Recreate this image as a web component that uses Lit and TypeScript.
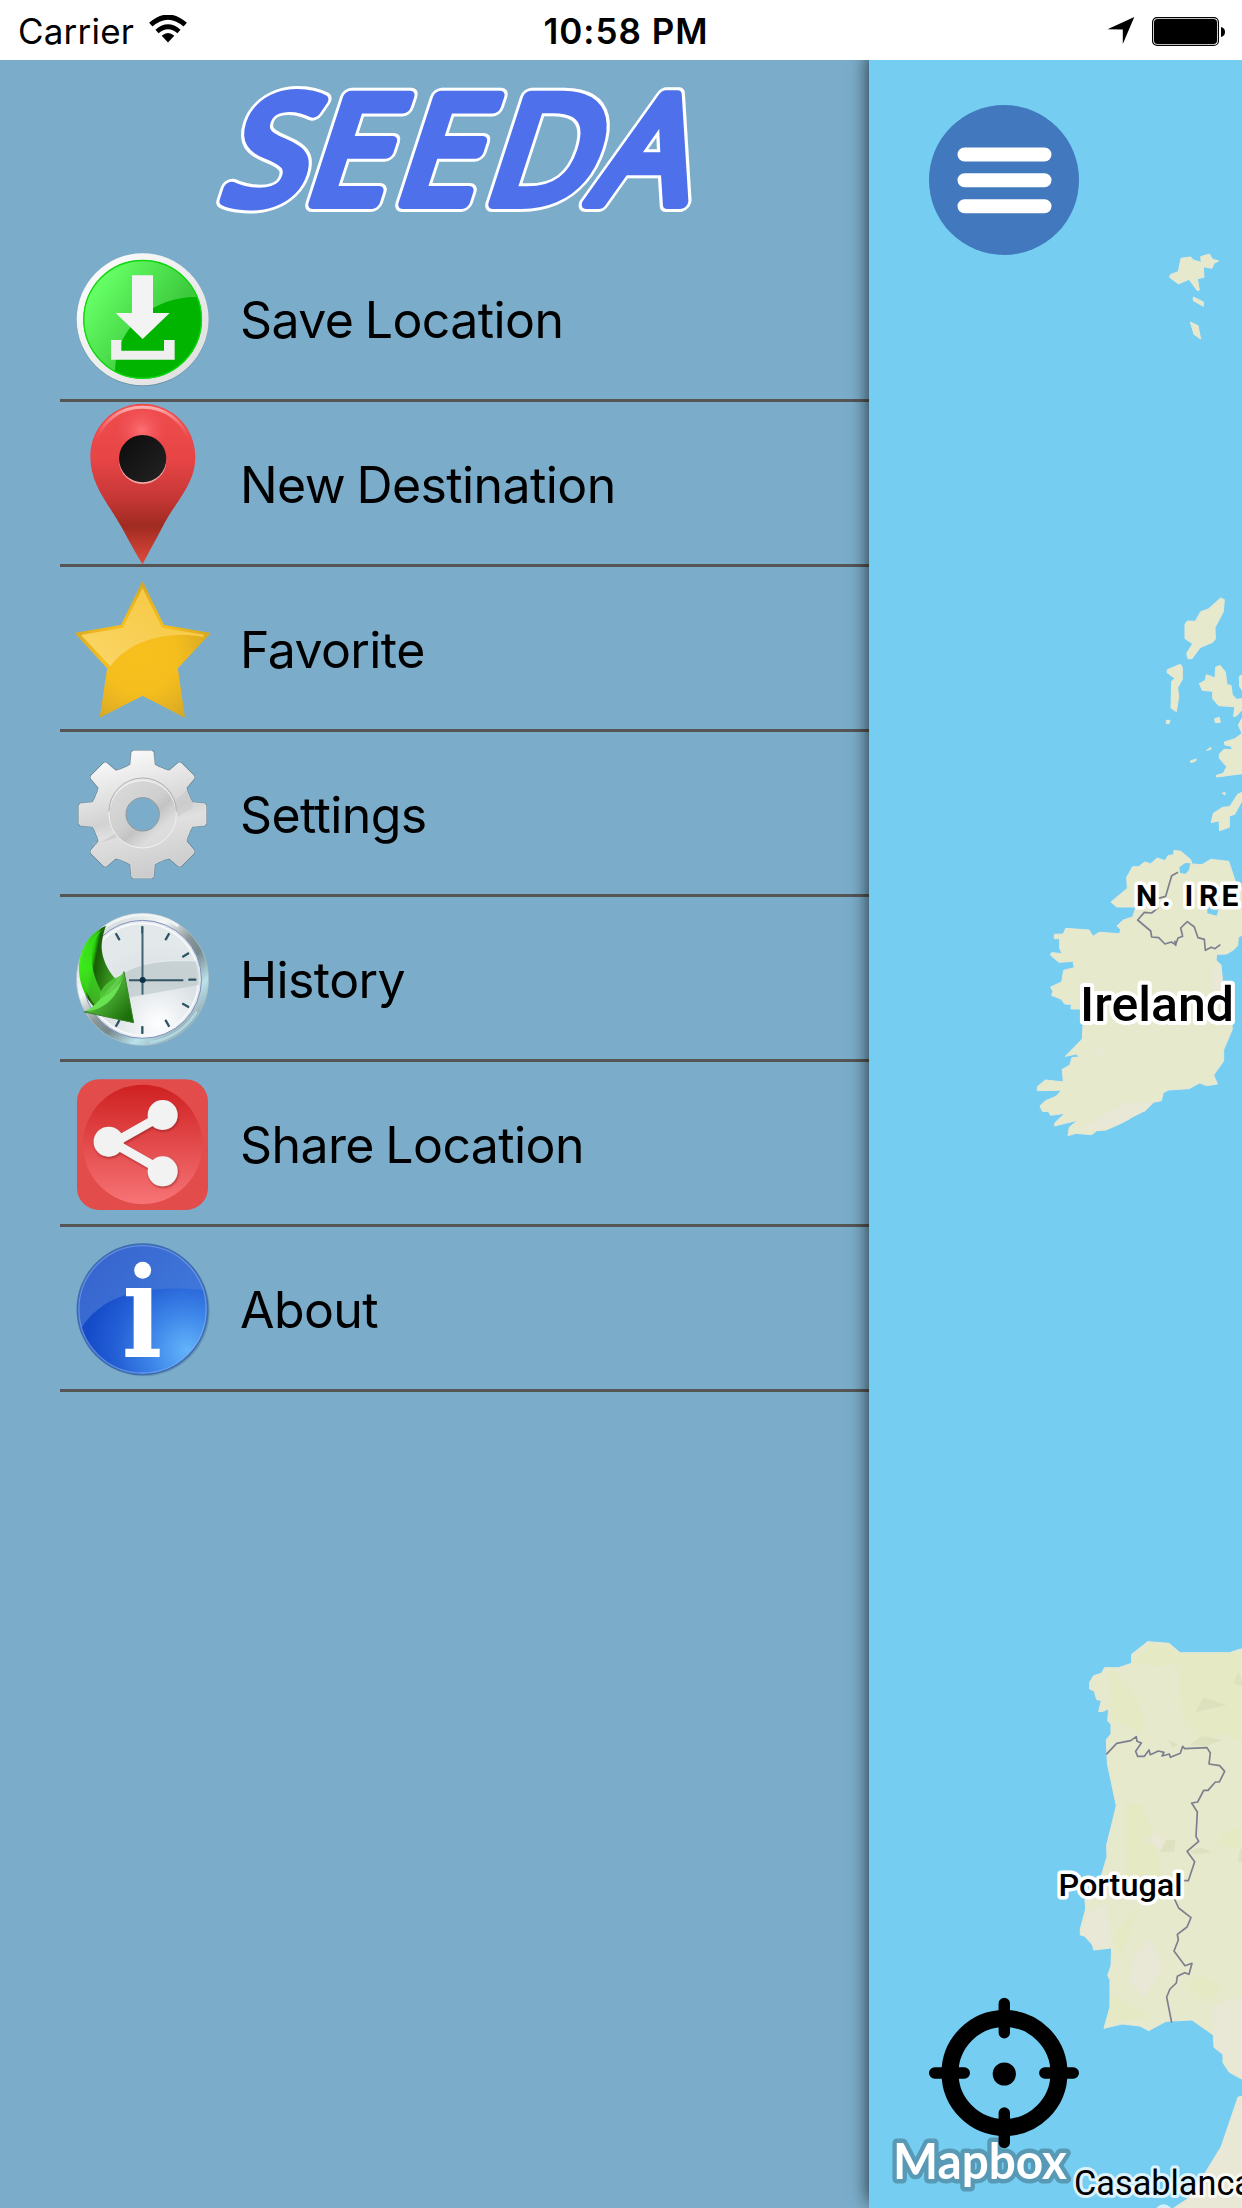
import { LitElement, html, svg, css, type SVGTemplateResult } from "lit";
import { customElement, property } from "lit/decorators.js";

/** Outline of an eight-toothed wheel centred on (cx, cy). */
function gearPath(cx: number, cy: number): string {
  const tooth: [number, number][] = [
    [-47, -143], [-36, -150], [-33, -186], [-28, -191],
    [28, -191], [33, -186], [36, -150], [47, -143],
  ];
  let d = "";
  for (let k = 0; k < 8; k++) {
    const a = (k * Math.PI) / 4;
    tooth.forEach(([x, y], i) => {
      const px = (cx + x * Math.cos(a) - y * Math.sin(a)).toFixed(1);
      const py = (cy + x * Math.sin(a) + y * Math.cos(a)).toFixed(1);
      if (k === 0 && i === 0) d += `M${px} ${py}`;
      else if (i === 0) d += `A150 150 0 0 1 ${px} ${py}`;
      else d += `L${px} ${py}`;
    });
  }
  return d + "Z";
}

const GEAR = gearPath(277.5, 763.5);

/** Clock marks: centre x, centre y, rotation in degrees. */
const ticks = [
  [277, 120, 0], [352, 140, 30], [407, 195, 60], [427, 269, 90],
  [407, 346, -60], [352, 400, -30], [277, 420, 0], [203, 400, 30], [203, 140, -30],
];

interface Glyph { box: string; art: SVGTemplateResult; }

const ICONS: Record<string, Glyph> = {
  save: {
    box: "72 -9 408 486",
    art: svg`
      <defs>
        <linearGradient id="ring" x1="0" y1="0" x2="1" y2="1"><stop offset="0" stop-color="#fff"/><stop offset="1" stop-color="#dcdcdc"/></linearGradient>
        <linearGradient id="gloss" gradientUnits="userSpaceOnUse" x1="130" y1="150" x2="330" y2="290"><stop offset="0" stop-color="#66ff66"/><stop offset="1" stop-color="#3cc93c"/></linearGradient>
        <clipPath id="disc"><circle cx="278" cy="238" r="177"/></clipPath>
      </defs>
      <circle cx="278" cy="240" r="198.5" fill="#5f7f90" opacity=".55"/>
      <circle cx="278" cy="238" r="198" fill="url(#ring)"/>
      <circle cx="278" cy="238" r="178" fill="#00b400"/>
      <path d="M90 50H460V172C340 160 200 240 195 392L90 420Z" fill="url(#gloss)" clip-path="url(#disc)"/>
      <circle cx="278" cy="238" r="176.500" fill="none" stroke="#11d811" stroke-width="4"/>
      <path d="M246 106H309V219H359L278 297L197 219H246Z" fill="#f3f3f3"/>
      <path d="M183 300H214V332H342V300H374V359H183Z" fill="#efefef"/>`,
  },
  pin: {
    box: "72 486 408 486",
    art: svg`
      <defs>
        <linearGradient id="pin" x1="0" y1="0" x2="0" y2="1"><stop offset="0" stop-color="#f04d4f"/><stop offset=".35" stop-color="#e74446"/><stop offset=".6" stop-color="#c43634"/><stop offset=".76" stop-color="#a02b21"/><stop offset="1" stop-color="#e04a3c"/></linearGradient>
        <radialGradient id="glow" gradientUnits="userSpaceOnUse" cx="275" cy="572" r="75"><stop offset="0" stop-color="#ff7074"/><stop offset="1" stop-color="#f05558" stop-opacity="0"/></radialGradient>
        <linearGradient id="rim" gradientUnits="userSpaceOnUse" x1="0" y1="495" x2="0" y2="600"><stop offset="0" stop-color="#ffb9ba"/><stop offset="1" stop-color="#f57072" stop-opacity="0"/></linearGradient>
        <linearGradient id="hole" x1="0" y1="0" x2="1" y2="1"><stop offset="0" stop-color="#0b0b0b"/><stop offset="1" stop-color="#242424"/></linearGradient>
      </defs>
      <path d="M278 491C190 491 121 562 121 650C121 735 175 790 214 860C240 908 262 948 278 973C292 944 315 905 337 862C375 785 436 735 436 650C436 562 366 491 278 491Z" fill="url(#pin)"/>
      <circle cx="275" cy="572" r="75" fill="url(#glow)"/>
      <path d="M137 606C158 540 212 502 278 502S398 540 420 606" fill="none" stroke="url(#rim)" stroke-width="9"/>
      <circle cx="278" cy="661" r="71" fill="#f2a8a6"/>
      <circle cx="278" cy="656" r="71" fill="url(#hole)"/>`,
  },
  star: {
    box: "72 21 408 486",
    art: svg`
      <defs>
        <radialGradient id="gold" gradientUnits="userSpaceOnUse" cx="270" cy="290" r="220"><stop offset="0" stop-color="#f7c01c"/><stop offset=".5" stop-color="#f5be1e"/><stop offset="1" stop-color="#d8a824"/></radialGradient>
        <linearGradient id="sheen" gradientUnits="userSpaceOnUse" x1="120" y1="300" x2="300" y2="80"><stop offset="0" stop-color="#fad565"/><stop offset="1" stop-color="#f7ca45"/></linearGradient>
      </defs>
      <path d="M277.500 66L341 196L480 220L382 325L403 471L277.500 406L151 471L173 325L76 220L214 196Z" fill="url(#gold)" stroke="url(#gold)" stroke-width="3"/>
      <path d="M277.500 84L336 203L462 224L459 231C350 212 240 240 181 319L93 225L219 203Z" fill="url(#sheen)"/>`,
  },
  gear: {
    box: "72 516 408 486",
    art: svg`
      <defs>
        <linearGradient id="steel" gradientUnits="userSpaceOnUse" x1="220" y1="570" x2="320" y2="960"><stop offset="0" stop-color="#fbfbfb"/><stop offset=".35" stop-color="#dfdfe0"/><stop offset=".5" stop-color="#d2d2d3"/><stop offset=".6" stop-color="#e0e0e0"/><stop offset="1" stop-color="#c9c9ca"/></linearGradient>
        <linearGradient id="steel2" gradientUnits="userSpaceOnUse" x1="200" y1="680" x2="350" y2="850"><stop offset="0" stop-color="#d9d9da"/><stop offset=".45" stop-color="#cfcfd0"/><stop offset=".6" stop-color="#c3c3c4"/><stop offset=".8" stop-color="#dcdcdd"/></linearGradient>
        <mask id="bore" maskUnits="userSpaceOnUse" x="72" y="516" width="408" height="486"><rect x="72" y="516" width="408" height="486" fill="#fff"/><circle cx="278" cy="763" r="49" fill="#000"/></mask>
      </defs>
      <g mask="url(#bore)">
        <path d=${GEAR} fill="none" stroke="#596a74" stroke-width="5" stroke-linejoin="round" opacity=".8"/>
        <path d=${GEAR} fill="url(#steel)" stroke="#f2f2f2" stroke-width="1.500"/>
        <path d="M330 763L410 690Q428 720 428 745L345 790Z" fill="#c4c4c5" opacity=".4"/>
        <path d="M255 815L130 855Q125 835 140 855L260 780Z" fill="#b9b9ba" opacity=".4"/>
        <circle cx="278" cy="763" r="101" fill="url(#steel2)" stroke="#f1f1f1" stroke-width="3"/>
        <path d="M177 755A101 101 0 0 1 379 755" fill="none" stroke="#a3a3a4" stroke-width="2.500"/>
      </g>
      <circle cx="278" cy="763" r="50" fill="none" stroke="#84939b" stroke-width="3"/>`,
  },
  history: {
    box: "72 21 408 486",
    art: svg`
      <defs>
        <linearGradient id="bezel" x1=".15" y1=".1" x2=".85" y2=".9"><stop offset="0" stop-color="#d0d8d9"/><stop offset=".3" stop-color="#f4f7f7"/><stop offset=".5" stop-color="#8a9697"/><stop offset=".62" stop-color="#76898d"/><stop offset=".8" stop-color="#b9e3ea"/><stop offset="1" stop-color="#8fa1ab"/></linearGradient>
        <radialGradient id="dial" gradientUnits="userSpaceOnUse" cx="325" cy="400" r="240"><stop offset="0" stop-color="#fff"/><stop offset=".25" stop-color="#eff2f4"/><stop offset=".6" stop-color="#dbe1e4"/><stop offset="1" stop-color="#e3e8eb"/></radialGradient>
        <linearGradient id="leaf" gradientUnits="userSpaceOnUse" x1="90" y1="200" x2="195" y2="220"><stop offset="0" stop-color="#49ee22"/><stop offset=".35" stop-color="#28c808"/><stop offset=".45" stop-color="#175d05"/><stop offset="1" stop-color="#3b9a20"/></linearGradient>
        <linearGradient id="lit" gradientUnits="userSpaceOnUse" x1="120" y1="120" x2="140" y2="345"><stop offset="0" stop-color="#35d817"/><stop offset=".5" stop-color="#3aea1a"/><stop offset="1" stop-color="#45b52c"/></linearGradient>
        <linearGradient id="tip" gradientUnits="userSpaceOnUse" x1="160" y1="300" x2="240" y2="370"><stop offset="0" stop-color="#54bb3c"/><stop offset="1" stop-color="#1c6f0a"/></linearGradient>
      </defs>
      <circle cx="277.500" cy="268" r="198" fill="url(#bezel)" stroke="#b4c2c9" stroke-width="2"/>
      <path d="M96 205A192 192 0 0 1 385 108" fill="none" stroke="#eef3f4" stroke-width="9"/>
      <path d="M300 457A190 190 0 0 0 440 365" fill="none" stroke="#b4e0e9" stroke-width="8" opacity=".8"/>
      <circle cx="277.500" cy="268" r="177" fill="url(#dial)" stroke="#8392c0" stroke-width="3"/>
      <circle cx="277.500" cy="268" r="168" fill="none" stroke="#f7f9fa" stroke-width="5"/>
      <path d="M195 268C245 220 330 208 438 213Q450 245 447 285L195 330Z" fill="#b4c3c5" opacity=".55"/>
      <path d="M195 268C245 220 330 208 438 213" fill="none" stroke="#edf1f2" stroke-width="2"/>
      ${ticks.map(([x, y, r]) => svg`<rect x=${x - 3.5} y=${y - 12} width="7" height="24" rx="2" fill="#2d5566" transform="rotate(${r} ${x} ${y})"/>`)}
      <path d="M277.500 132V314" stroke="#416271" stroke-width="6"/>
      <path d="M237 270.500H400" stroke="#325463" stroke-width="6"/>
      <circle cx="278" cy="270" r="9" fill="#0a3246"/>
      <path d="M168 107C108 135 84 190 87 245C90 290 110 325 131 350L200 270C170 240 148 190 157 150C158 135 164 118 168 107Z" fill="url(#leaf)"/>
      <path d="M160 118C115 155 112 235 160 315L137 347C85 290 72 170 160 118Z" fill="url(#lit)" opacity=".85"/>
      <path d="M222 245L251 398L103 366C160 352 195 320 222 245Z" fill="url(#tip)" stroke="#3a8229" stroke-width="3"/>
      <path d="M222 248C212 288 190 300 160 315C145 335 125 355 107 364C160 360 205 325 222 248Z" fill="#68e252"/>
      <path d="M192 265Q208 262 222 247C212 288 190 305 150 327C145 300 170 280 192 265Z" fill="#51c937" opacity=".85"/>`,
  },
  share: {
    box: "72 516 408 486",
    art: svg`
      <defs>
        <linearGradient id="red" x1="0" y1="0" x2="0" y2="1"><stop offset="0" stop-color="#cf2021"/><stop offset="1" stop-color="#f77476"/></linearGradient>
        <filter id="drop" x="-20%" y="-20%" width="140%" height="140%"><feDropShadow dx="2" dy="4" stdDeviation="3" flood-color="#7a1010" flood-opacity=".6"/></filter>
      </defs>
      <rect x="81" y="568" width="393" height="392" rx="66" fill="#e24c4a"/>
      <circle cx="278" cy="763" r="179" fill="url(#red)"/>
      <g filter="url(#drop)" fill="#f2f2f2">
        <path d="M338 675L190 759L338 843" fill="none" stroke="#f2f2f2" stroke-width="27"/>
        <circle cx="338" cy="675" r="45"/><circle cx="176" cy="755" r="45"/><circle cx="338" cy="844" r="45"/>
      </g>`,
  },
  info: {
    box: "72 21 408 486",
    art: svg`
      <defs>
        <radialGradient id="blue" gradientUnits="userSpaceOnUse" cx="410" cy="390" r="300"><stop offset="0" stop-color="#62b4fb"/><stop offset=".35" stop-color="#3f88ea"/><stop offset=".7" stop-color="#2460d6"/><stop offset="1" stop-color="#154bc9"/></radialGradient>
        <linearGradient id="cap" x1="0" y1="0" x2="1" y2=".5"><stop offset="0" stop-color="#3560cb"/><stop offset="1" stop-color="#3f78da"/></linearGradient>
        <clipPath id="ball"><circle cx="277.500" cy="268" r="192"/></clipPath>
      </defs>
      <circle cx="282" cy="272" r="197" fill="#4e7d9b" opacity=".5"/>
      <circle cx="277.500" cy="268" r="198" fill="#3e6cb0"/>
      <circle cx="277.500" cy="268" r="193" fill="url(#blue)"/>
      <path d="M70 50H490V212C320 195 170 205 94 324H70Z" fill="url(#cap)" clip-path="url(#ball)"/>
      <circle cx="277.500" cy="268" r="191" fill="none" stroke="#7fa9ec" stroke-width="4" opacity=".65"/>
      <circle cx="278" cy="151" r="25.500" fill="#fff"/>
      <path d="M228 204H304V386H329V411H226V386H251V229H228Z" fill="#fff"/>`,
  },
};

@customElement("menu-row")
class MenuRow extends LitElement {
  @property() icon = "";
  @property() label = "";

  static styles = css`
    :host { display: flex; align-items: center; height: 162px; padding-left: 14px; border-bottom: 3px solid #555; }
    .icon { width: 136px; height: 162px; flex: none; overflow: visible; }
    .label { padding: 4px 0 0 30px; font: 400 50px/60px Inter, "Liberation Sans", sans-serif; letter-spacing: -0.6px; word-spacing: -2px; color: #000; white-space: nowrap; }
  `;

  render() {
    const g = ICONS[this.icon];
    return html`<svg class="icon" viewBox=${g.box}>${g.art}</svg><span class="label">${this.label}</span>`;
  }
}

@customElement("status-bar")
class StatusBar extends LitElement {
  static styles = css`
    :host { display: grid; grid-template-columns: 1fr auto 1fr; align-items: center; height: 60px; box-sizing: border-box; padding: 2px 16px 0 18px; background: #fff; color: #000; font: 400 35px/56px Inter, "Liberation Sans", sans-serif; }
    .side { display: flex; align-items: center; gap: 15px; }
    .end { justify-content: flex-end; gap: 17px; }
    .carrier { letter-spacing: 0.2px; }
    .time { font-weight: 600; letter-spacing: 1px; padding-left: 8px; }
    svg { display: block; flex: none; }
    .lift { margin-top: -4px; }
  `;

  render() {
    return html`
      <div class="side">
        <span class="carrier">Carrier</span>
        <svg class="lift" width="38" height="28" viewBox="0 0 38 28">
          <path d="M1.800 9.700Q19-5.500 36.200 9.700" fill="none" stroke="#000" stroke-width="5"/>
          <path d="M8 16.500Q19 7.200 30 16.500" fill="none" stroke="#000" stroke-width="4.800"/>
          <path d="M12.700 20.700Q19 15.500 25.300 20.700L19 27.500Z"/>
        </svg>
      </div>
      <div class="time">10:58 PM</div>
      <div class="side end">
        <svg width="28" height="28" viewBox="0 0 28 28"><path d="M27.300 0L15.800 27V12.500L0.500 12.200Z"/></svg>
        <svg width="74" height="29" viewBox="0 0 74 29">
          <rect x=".6" y=".6" width="65.800" height="27.800" rx="4.500" fill="none" stroke="#000" stroke-width="1.200"/>
          <rect x="2" y="2" width="63" height="25" rx="3.500"/>
          <path d="M69 10Q73 11 73 15T69 20Z"/>
        </svg>
      </div>`;
  }
}

@customElement("map-view")
class MapView extends LitElement {
  static styles = css`
    :host { display: block; background: #75cef1; box-shadow: 0 -6px 18px rgba(0, 0, 0, 0.78); }
    .canvas { display: block; width: 100%; height: 100%; }
    .land { fill: #e6e9cb; stroke: #e8e7d6; stroke-width: 3; stroke-linejoin: round; }
    .sand { fill: #e9e7d5; }
    .green { fill: #e4eabf; }
    .pale { opacity: 0.6; }
    .hill { fill: #dbdebb; opacity: 0.75; }
    .water { fill: #75cef1; }
    .border { fill: none; stroke: #7d7f8f; stroke-width: 5; stroke-linejoin: round; }
    .name { font-family: Roboto, "Liberation Sans", sans-serif; fill: #000; stroke: #fff; stroke-linejoin: round; paint-order: stroke; }
    .nation { font-size: 49px; font-weight: 500; stroke-width: 8px; }
    .region { font-size: 30px; font-weight: 700; stroke-width: 7px; }
    .state { font-size: 32px; font-weight: 500; stroke-width: 7px; }
    .city { font-size: 35px; font-weight: 400; stroke-width: 6px; stroke: rgba(255, 255, 255, 0.75); }
    .brand { font: 700 49px Lato, sans-serif; fill: #fff; stroke: #5899b5; stroke-width: 9px; stroke-linejoin: round; paint-order: stroke; }
    .bars { stroke: #fff; stroke-width: 14; stroke-linecap: round; }
    .aim { fill: none; stroke: #000; stroke-width: 17; }
    .arms { stroke: #000; stroke-width: 11.4; stroke-linecap: round; }
  `;

  render() {
    return html`
      <svg class="canvas" viewBox="869 60 373 2148">
        <g transform="translate(860 0) scale(.333333)">
          <path class="land" d="M963 775L992 771L1000 780L1024 787L1022 770L1048 762L1058 778L1076 783L1062 790L1056 805L1030 800L1032 832L1012 836L1018 870L1012 872L987 838L955 852L929 832L931 824L955 815Z M1000 891L1030 906V919L1000 902Z M991 966L1014 977L1022 1017L1002 1003Z"/>
        </g>
        <g transform="translate(1100 560) scale(.333333)">
          <path class="land" d="M362 114L373 119L370 155L345 203L346 237L338 247L300 263L276 296H264L260 280L278 251L255 236V193L262 183L286 184L302 155L325 147Z M241 313L247 322V358L233 383L236 412L229 455L213 444L215 364L225 355L201 338L202 329Z M360 316L376 336L381 374L393 376L397 404L410 418L426 416V450L410 467L401 470L404 440L356 437L338 416V394L307 391L298 371L316 361L319 344L345 354L347 322Z M426 345L418 349L419 380L426 390Z M199 481H210L207 491H199Z M344 476L358 472L361 487L346 488Z M426 475L415 495L426 520L405 536L373 546L375 555L392 558L398 569L372 568L358 582V595L380 620L370 640L349 646L350 651L426 641Z M271 603L289 597L287 603L273 608Z M320 571L332 562L333 568Z M367 699L376 698L374 705Z M426 697L413 703L389 740L368 742L340 760L334 788L357 782L359 812L388 802V768L404 763L426 722Z"/>
        </g>
        <g transform="translate(1000 820) scale(.333333)">
          <path class="land" d="M522 91L543 94L572 119L576 132L606 134L632 118L686 124L705 181L726 205V345L715 352L713 377L700 390L680 402L650 403L648 421L663 435L668 490L695 600L697 628L671 689V723L641 765L652 792L620 797L599 789L567 806L506 810L490 818L484 842L460 847L435 873L400 880L388 897L357 913L318 930L290 932L275 944L228 940L204 947L208 922L233 901L163 918L166 907L195 880L152 886L145 874L128 875L120 858L137 842L168 829L185 811L112 812V800L136 780L190 786L187 748L210 735L216 713L238 711L229 702L196 709L247 657L249 617L275 585L249 567H213L214 553L194 552L184 538L155 526L159 514L152 501L185 486L191 451L223 443L219 424L177 427L151 405L155 398L186 401L179 384V356H163V343L190 342L197 325L267 330L279 349L298 337L359 341L362 328L351 318L370 300L398 291L408 261H350L333 246L382 205L380 172L398 140H416L434 126L452 131L472 114L495 122L504 107L521 104Z"/>
          <path class="sand" d="M640 440L663 435L668 480L690 600L660 560L632 500Z M370 850L460 847L435 873L360 912L290 932H235Z M285 690L320 680L310 700L290 710Z"/>
          <path class="water" d="M538 142L556 129L571 130L567 150L556 162L540 158Z M622 264L658 238V260L650 287L622 280Z M280 570L290 575V592L280 588Z"/>
          <path class="border" d="M534 157L515 167L497 229L472 236M476 262L455 279L433 277L413 300L452 333L455 351L476 353L495 372L514 366L527 374L534 354L548 349L542 324L562 305L583 321L594 353L613 358L616 391L634 382L645 386L661 374M524 362L528 378"/>
        </g>
        <g transform="translate(1040 1620) scale(.333333)">
          <path class="land" d="M620 82L606 86L568 98H420L387 70L323 65L275 103V130L235 143H194L184 160L161 167L149 187V207L163 213L170 239L184 241L176 275L190 274L206 266L203 303L213 312V342L199 359L202 430L229 558L200 675L201 710L180 780L135 840L137 867L121 927V945L152 952L161 990L215 984L213 1038L203 1066L210 1080V1162L192 1225L246 1212L300 1218L326 1232L378 1204L456 1200L520 1245L522 1282L549 1303V1328L568 1357L620 1385Z"/>
          <path class="green pale" d="M410 100H620V370L540 340L500 380L430 300Z M275 130L320 90L330 70L385 72L430 120L360 140Z M210 140L290 230L310 300L300 340L215 300Z M255 545L310 560L330 620L370 780L260 770Z M240 1020L300 850L220 950Z M215 1120L330 1190L200 1210Z M440 1100L480 1060L545 1100L500 1150Z M545 640L606 620V680L530 680Z"/>
          <path class="sand" d="M280 1010L330 950L370 1050L310 1130L270 1090Z M520 1160L620 1120V1380L568 1350L549 1303L522 1282Z M140 880L200 850L215 980L165 985L125 940Z M320 660L350 640L380 660L365 690Z"/>
          <path class="hill" d="M467 277L490 233L560 255Z M580 190L596 155L610 200Z M361 695L378 660H406L402 695Z M384 360L415 372L400 385Z M450 375L485 348L545 360L500 378Z M450 695L480 682L515 697L465 703Z M594 727L600 690L610 680V727Z"/>
          <path class="border" d="M199 403L230 370L272 362L289 350L291 364L304 369L287 394L293 409H313L327 390L331 404L355 393L372 397L366 408L388 402L391 412L421 400L428 379L434 386L501 383L511 399L507 432L539 437L554 454L538 486H526L504 511H491L473 546L455 549L472 576L468 650L476 664L441 694L464 725L445 782H426M403 836L416 864L453 893L441 921L412 943L415 960L402 993L435 1037L456 1030L447 1063L434 1058L412 1069L409 1089L390 1107L380 1131L395 1208"/>
        </g>
        <g transform="translate(1040 1860) scale(.333333)">
          <path class="sand" d="M620 705L593 710L542 860L490 945L450 1010L390 1050H620Z"/>
          <circle cx="371" cy="1060" r="27" fill="#fff" opacity=".7"/>
        </g>
        <text class="name region" y="905.500" x="1136 1162 1170 1184.500 1199 1221.500">N. IRE</text>
        <text class="name nation" x="1080" y="1021" textLength="154" lengthAdjust="spacingAndGlyphs">Ireland</text>
        <text class="name state" x="1058.500" y="1896" textLength="124" lengthAdjust="spacingAndGlyphs">Portugal</text>
        <text class="name city" x="1074" y="2195" textLength="179" lengthAdjust="spacingAndGlyphs">Casablanca</text>

        <circle cx="1004" cy="180" r="75" fill="#4278bd"/>
        <path class="bars" d="M964.500 154.500H1044.500M964.500 180.200H1044.500M964.500 206.200H1044.500"/>

        <text class="brand" x="893" y="2179" textLength="174" lengthAdjust="spacingAndGlyphs">Mapbox</text>
        <circle class="aim" cx="1004.500" cy="2073" r="54.500"/>
        <circle cx="1004.300" cy="2074" r="11.600"/>
        <path class="arms" d="M1004.300 2003.500V2032.800M1004.300 2113V2142.500M934.700 2073H964.300M1044.800 2073H1073.300"/>
      </svg>`;
  }
}

@customElement("side-menu")
class SideMenu extends LitElement {
  static styles = css`
    :host { display: flex; flex-direction: column; background: #7badca; }
    .logo { display: block; width: 869px; height: 177px; flex: none; overflow: visible; }
    .rows { display: flex; flex-direction: column; padding-left: 60px; }
    .word { font: 400 149px "Open Sans", Lato, sans-serif; stroke-linejoin: round; stroke-linecap: round; }
    .back { fill: #fff; stroke: #fff; stroke-width: 18px; }
    .front { fill: #4e70ea; stroke: #4e70ea; stroke-width: 12px; }
  `;

  render() {
    const rows = [
      ["save", "Save Location"], ["pin", "New Destination"], ["star", "Favorite"],
      ["gear", "Settings"], ["history", "History"], ["share", "Share Location"], ["info", "About"],
    ];
    const xs = "217 300 390 480 588";
    return html`
      <svg class="logo" viewBox="0 60 869 177">
        <g transform="translate(0 203) skewX(-18)">
          <text class="word back" x=${xs} y="0">SEEDA</text>
          <text class="word front" x=${xs} y="0">SEEDA</text>
        </g>
      </svg>
      <div class="rows">
        ${rows.map(([icon, label]) => html`<menu-row .icon=${icon} .label=${label}></menu-row>`)}
      </div>`;
  }
}

@customElement("app-root")
class AppRoot extends LitElement {
  static styles = css`
    :host { display: flex; flex-direction: column; width: 1242px; height: 2208px; overflow: hidden; }
    status-bar { flex: none; z-index: 1; }
    .body { display: grid; grid-template-columns: 869px 373px; flex: 1; min-height: 0; }
  `;

  render() {
    return html`
      <status-bar></status-bar>
      <div class="body">
        <side-menu></side-menu>
        <map-view></map-view>
      </div>`;
  }
}
